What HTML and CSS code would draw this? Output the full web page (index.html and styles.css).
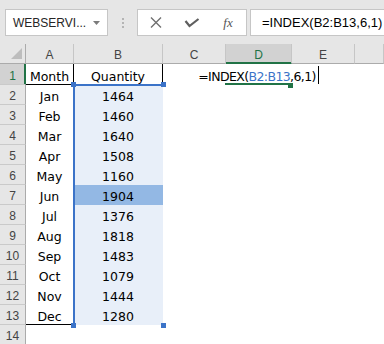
FILE: index.html
```html
<!DOCTYPE html>
<html lang="en">
<head>
  <meta charset="UTF-8">
  <meta name="viewport" content="width=device-width, initial-scale=1.0">
  <title>INDEX formula</title>
  <link rel="stylesheet" href="styles.css">
</head>
<body>
  <div class="toolbar">
    <div class="namebox">
      <span>WEBSERVI...</span>
      <svg class="caret-down" width="7" height="4" viewBox="0 0 7 4"><polygon points="0,0 7,0 3.5,4" fill="#7b7b7b"/></svg>
    </div>
    <div class="grip"><i></i><i></i><i></i></div>
    <div class="fbtns">
      <span class="fbtn">
        <svg width="12" height="11" viewBox="0 0 12 11"><path d="M1 0.5 L11 10.5 M11 0.5 L1 10.5" stroke="#707070" stroke-width="1.4" fill="none"/></svg>
      </span>
      <span class="fbtn">
        <svg width="16" height="10" viewBox="0 0 16 10"><polyline points="1.5,3 5.5,8 14.5,1" stroke="#5f5f5f" stroke-width="2.2" fill="none"/></svg>
      </span>
      <span class="fbtn fx">fx</span>
    </div>
    <div class="fbar">=INDEX(B2:B13,6,1)</div>
  </div>

  <div class="sheet" id="sheet">
    <!-- range picked by the formula -->
    <div class="selection">
      <span class="handle tl"></span>
      <span class="handle tr"></span>
      <span class="handle bl"></span>
      <span class="handle br"></span>
    </div>
  </div>

  <script>
    const months = ["Jan", "Feb", "Mar", "Apr", "May", "Jun", "Jul", "Aug", "Sep", "Oct", "Nov", "Dec"];
    const amounts = [1464, 1460, 1640, 1508, 1160, 1904, 1376, 1818, 1483, 1079, 1444, 1280];
    const sheet = document.getElementById("sheet");

    // Function to add one grid cell
    function addCell(className, html) {
      const div = document.createElement("div");
      div.className = className;
      div.innerHTML = html === undefined ? "" : html;
      sheet.appendChild(div);
      return div;
    }

    // Column headers
    addCell("corner", '<svg width="11" height="11" viewBox="0 0 11 11"><polygon points="11,0 11,11 0,11" fill="#bdbdbd"/></svg>');
    ["A", "B", "C", "D", "E", ""].forEach(letter => {
      addCell(letter === "D" ? "col-head active" : "col-head", letter);
    });

    // Row 1: table heading and the cell being edited
    addCell("row-head active", "1");
    addCell("cell title", "Month");
    addCell("cell title", "Quantity");
    addCell("cell");
    addCell("cell editing",
      '<span class="edit-text">=INDEX(<span class="ref">B2:B13</span>,6,1)<i class="cursor"></i></span>' +
      '<span class="active-line"></span><span class="fill-handle"></span>');
    addCell("cell");
    addCell("cell");

    // Rows 2 - 13
    months.forEach((month, i) => {
      const row = i + 2;
      addCell("row-head", row);
      addCell(row === 13 ? "cell last" : "cell", month);
      addCell(row === 7 ? "cell range picked" : "cell range", amounts[i]);
      for (let c = 0; c < 4; c++) addCell("cell");
    });

    // Row 14
    addCell("row-head", "14");
    for (let c = 0; c < 6; c++) addCell("cell");
  </script>
</body>
</html>
```

FILE: styles.css
```css
body {
  margin: 0;
  background-color: #fff;
  font-family: "DejaVu Sans", sans-serif;
  overflow: hidden;
}

/* Formula bar */
.toolbar {
  height: 44px;
  box-sizing: border-box;
  padding-top: 9px;
  background-color: #e6e6e6;
  display: flex;
  align-items: flex-start;
  font-family: "Liberation Sans", Arial, sans-serif;
}

.namebox {
  margin-left: 5px;
  width: 103px;
  height: 27px;
  box-sizing: border-box;
  border: 1px solid #c6c6c6;
  background-color: #fff;
  display: flex;
  align-items: center;
  padding-left: 7px;
  font-size: 12px;
  color: #262626;
}

.caret-down {
  margin-left: auto;
  margin-right: 7px;
}

.grip {
  width: 29px;
  padding-top: 9px;
  display: flex;
  flex-direction: column;
  align-items: center;
  gap: 2px;
}

.grip i {
  width: 2px;
  height: 2px;
  background-color: #b4b4b4;
}

.fbtns {
  width: 110px;
  height: 27px;
  box-sizing: border-box;
  border: 1px solid #c6c6c6;
  background-color: #fff;
  display: flex;
  align-items: center;
}

.fbtn {
  width: 36px;
  display: flex;
  justify-content: center;
  align-items: center;
}

.fx {
  font-family: "Liberation Serif", serif;
  font-style: italic;
  font-size: 13px;
  color: #555;
}

.fbar {
  margin-left: 3px;
  flex: 1;
  height: 27px;
  box-sizing: border-box;
  border: 1px solid #c6c6c6;
  border-right: none;
  background-color: #fff;
  padding-left: 11px;
  font-size: 13px;
  line-height: 25px;
  color: #000;
}

/* Worksheet */
.sheet {
  position: relative;
  display: grid;
  grid-template-columns: 26px 48px 89px 63px 66px 63px 1fr;
  grid-template-rows: 20px 21px repeat(13, 20px);
  font-size: 12.5px;
}

.sheet > div {
  box-sizing: border-box;
  border-right: 1px solid transparent;
  border-bottom: 1px solid transparent;
  display: flex;
  justify-content: center;
  align-items: flex-end;
  line-height: 15px;
  white-space: nowrap;
}

.sheet > .corner {
  background-color: #e6e6e6;
  border-right-color: #ababab;
  border-bottom-color: #ababab;
  justify-content: flex-end;
  padding: 0 3px 4px 0;
}

.sheet > .col-head {
  background-color: #e6e6e6;
  border-right-color: #c6c6c6;
  border-bottom-color: #ababab;
  font-family: "Liberation Sans", Arial, sans-serif;
  font-size: 12px;
  color: #444;
}

.sheet > .col-head.active {
  background-color: #d2d2d2;
  border-bottom-color: #217346;
  box-shadow: inset 0 -1px 0 #217346;
  color: #217346;
}

.sheet > .row-head {
  background-color: #e6e6e6;
  border-right-color: #ababab;
  border-bottom-color: #cacaca;
  font-family: "Liberation Sans", Arial, sans-serif;
  font-size: 12px;
  color: #444;
}

.sheet > .row-head.active {
  background-color: #d2d2d2;
  border-right-color: #217346;
  box-shadow: inset -1px 0 0 #217346;
  color: #217346;
}

.sheet > .title {
  border-right-color: #000;
  border-bottom-color: #000;
}

.sheet > .last {
  border-bottom-color: #000;
}

.sheet > .range {
  background-color: #e8eff9;
}

.sheet > .picked {
  background-color: #93b8e4;
}

/* Cell D1 in edit mode */
.sheet > .editing {
  position: relative;
}

.edit-text {
  letter-spacing: -0.6px;
}

.ref {
  color: #3b73c8;
}

.cursor {
  display: inline-block;
  width: 1px;
  height: 18px;
  margin-left: 2px;
  vertical-align: -3px;
  background-color: #000;
}

.active-line {
  position: absolute;
  left: -1px;
  bottom: -1px;
  width: 63px;
  height: 2px;
  background-color: #217346;
}

.fill-handle {
  position: absolute;
  left: 62px;
  bottom: -4px;
  width: 5px;
  height: 5px;
  background-color: #217346;
}

/* Blue outline of B2:B13 */
.selection {
  position: absolute;
  left: 73px;
  top: 40px;
  width: 90px;
  height: 241px;
  box-sizing: border-box;
  border: 2px solid #3b73c8;
}

.handle {
  position: absolute;
  width: 5px;
  height: 5px;
  background-color: #3b73c8;
}

.handle.tl { left: -4px; top: -4px; }
.handle.tr { right: -4px; top: -4px; }
.handle.bl { left: -4px; bottom: -4px; }
.handle.br { right: -4px; bottom: -4px; }
```
